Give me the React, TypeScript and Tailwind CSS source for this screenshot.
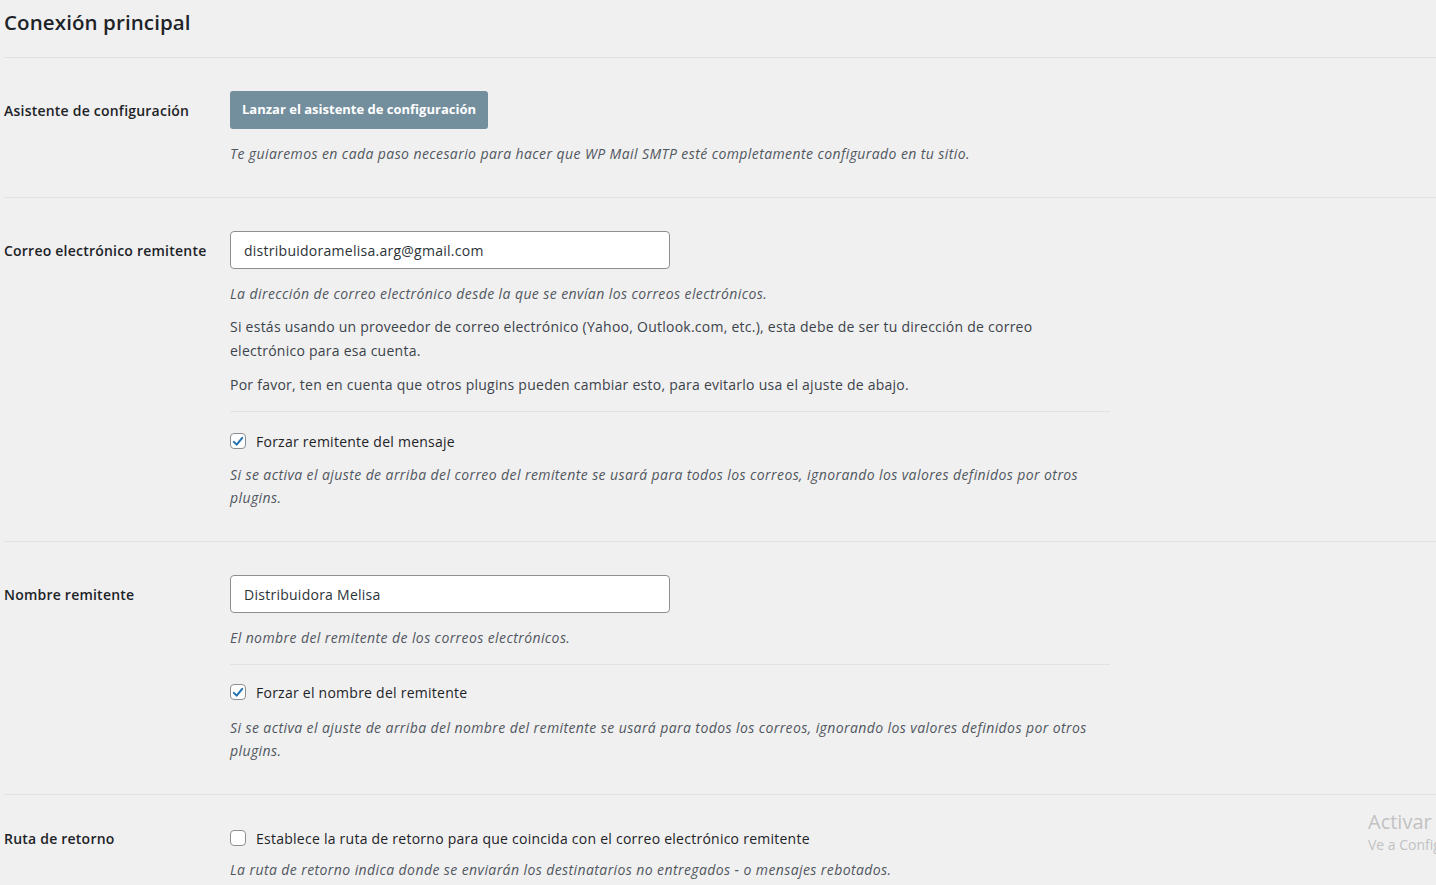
import React from "react";

const font = { fontFamily: '"Open Sans", "Noto Sans", sans-serif' };

function Check({ checked }: { checked: boolean }) {
  return (
    <span className="flex h-4 w-4 shrink-0 items-center justify-center rounded-[4px] border border-[#8c8f94] bg-white">
      {checked && (
        <svg viewBox="0 0 16 16" className="h-[15px] w-[15px]">
          <path d="M3.2 8.4 L6.5 11.6 L12.8 3.8" fill="none" stroke="#2271b1" strokeWidth="2.3" strokeLinecap="round" strokeLinejoin="round" />
        </svg>
      )}
    </span>
  );
}

function Row({ label, children, last, pb = "pb-[32px]" }: { label: string; children: React.ReactNode; last?: boolean; pb?: string }) {
  return (
    <div className={`flex pt-[33px] ${last ? "" : `border-b border-[#e2e2e2] ${pb}`}`}>
      <div className="w-[226px] shrink-0">
        <div className={`flex ${last ? "h-5" : "h-[38px]"} items-center text-[14px] font-semibold tracking-[0.22px] text-[#1d2327]`}>{label}</div>
      </div>
      <div className="w-[880px]">{children}</div>
    </div>
  );
}

function Desc({ children, className = "" }: { children: React.ReactNode; className?: string }) {
  return <p className={`text-[14px] italic leading-[23px] tracking-[0.41px] text-[#50575e] ${className}`}>{children}</p>;
}

function Input({ value }: { value: string }) {
  return (
    <div className="flex h-[38px] w-[440px] items-center rounded-[4px] border border-[#8c8f94] bg-white px-[13px] text-[14px] tracking-[0.26px] text-[#2c3338]">
      {value}
    </div>
  );
}

export default function App() {
  return (
    <div className="relative h-[885px] w-full overflow-hidden bg-[#f0f0f1] text-[#1d2327]" style={font}>
      <div className="pl-[4px]">
        <div className="flex h-[58px] items-start border-b border-[#e2e2e2] pt-[7px]">
          <h2 className="text-[20.5px] font-semibold leading-[30px] tracking-[0.1px] text-[#1d2327]">Conexión principal</h2>
        </div>

        <Row label="Asistente de configuración" pb="pb-[32px]">
          <div className="flex h-[38px] w-[258px] items-center justify-center rounded-[3px] bg-[#738e9d] text-[13px] font-bold text-white">
            Lanzar el asistente de configuración
          </div>
          <Desc className="mt-[13px]">
            Te guiaremos en cada paso necesario para hacer que WP Mail SMTP esté completamente configurado en tu sitio.
          </Desc>
        </Row>

        <Row label="Correo electrónico remitente" pb="pb-[32px]">
          <Input value="distribuidoramelisa.arg@gmail.com" />
          <Desc className="mt-[13px]">La dirección de correo electrónico desde la que se envían los correos electrónicos.</Desc>
          <p className="mt-[10px] text-[14px] leading-[24px] tracking-[0.25px] text-[#3c434a]">
            Si estás usando un proveedor de correo electrónico (Yahoo, Outlook.com, etc.), esta debe de ser tu dirección de correo electrónico para esa cuenta.
          </p>
          <p className="mt-[10px] text-[14px] leading-[24px] tracking-[0.25px] text-[#3c434a]">
            Por favor, ten en cuenta que otros plugins pueden cambiar esto, para evitarlo usa el ajuste de abajo.
          </p>
          <div className="mt-[14px] border-t border-[#e2e2e2] pt-[19px]">
            <label className="flex h-5 items-center gap-[10px] text-[14px] tracking-[0.25px] text-[#1d2327]">
              <Check checked />
              <span>Forzar remitente del mensaje</span>
            </label>
            <Desc className="mt-[12px]">
              Si se activa el ajuste de arriba del correo del remitente se usará para todos los correos, ignorando los valores definidos por otros plugins.
            </Desc>
          </div>
        </Row>

        <Row label="Nombre remitente" pb="pb-[32px]">
          <Input value="Distribuidora Melisa" />
          <Desc className="mt-[13px]">El nombre del remitente de los correos electrónicos.</Desc>
          <div className="mt-[15px] border-t border-[#e2e2e2] pt-[17px]">
            <label className="flex h-5 items-center gap-[10px] text-[14px] tracking-[0.25px] text-[#1d2327]">
              <Check checked />
              <span>Forzar el nombre del remitente</span>
            </label>
            <Desc className="mt-[14px]">
              Si se activa el ajuste de arriba del nombre del remitente se usará para todos los correos, ignorando los valores definidos por otros plugins.
            </Desc>
          </div>
        </Row>

        <Row label="Ruta de retorno" last>
          <label className="flex h-5 items-center gap-[10px] text-[14px] tracking-[0.25px] text-[#1d2327]">
            <Check checked={false} />
            <span>Establece la ruta de retorno para que coincida con el correo electrónico remitente</span>
          </label>
          <Desc className="mt-[10px]">
            La ruta de retorno indica donde se enviarán los destinatarios no entregados - o mensajes rebotados.
          </Desc>
        </Row>
      </div>

      <div className="absolute left-[1368px] top-[809px] whitespace-nowrap text-[#c2c2c2]">
        <div className="text-[20px] leading-[26px]">Activar Windows</div>
        <div className="text-[14px] leading-[20px]">Ve a Configuración para activar Windows.</div>
      </div>
    </div>
  );
}
